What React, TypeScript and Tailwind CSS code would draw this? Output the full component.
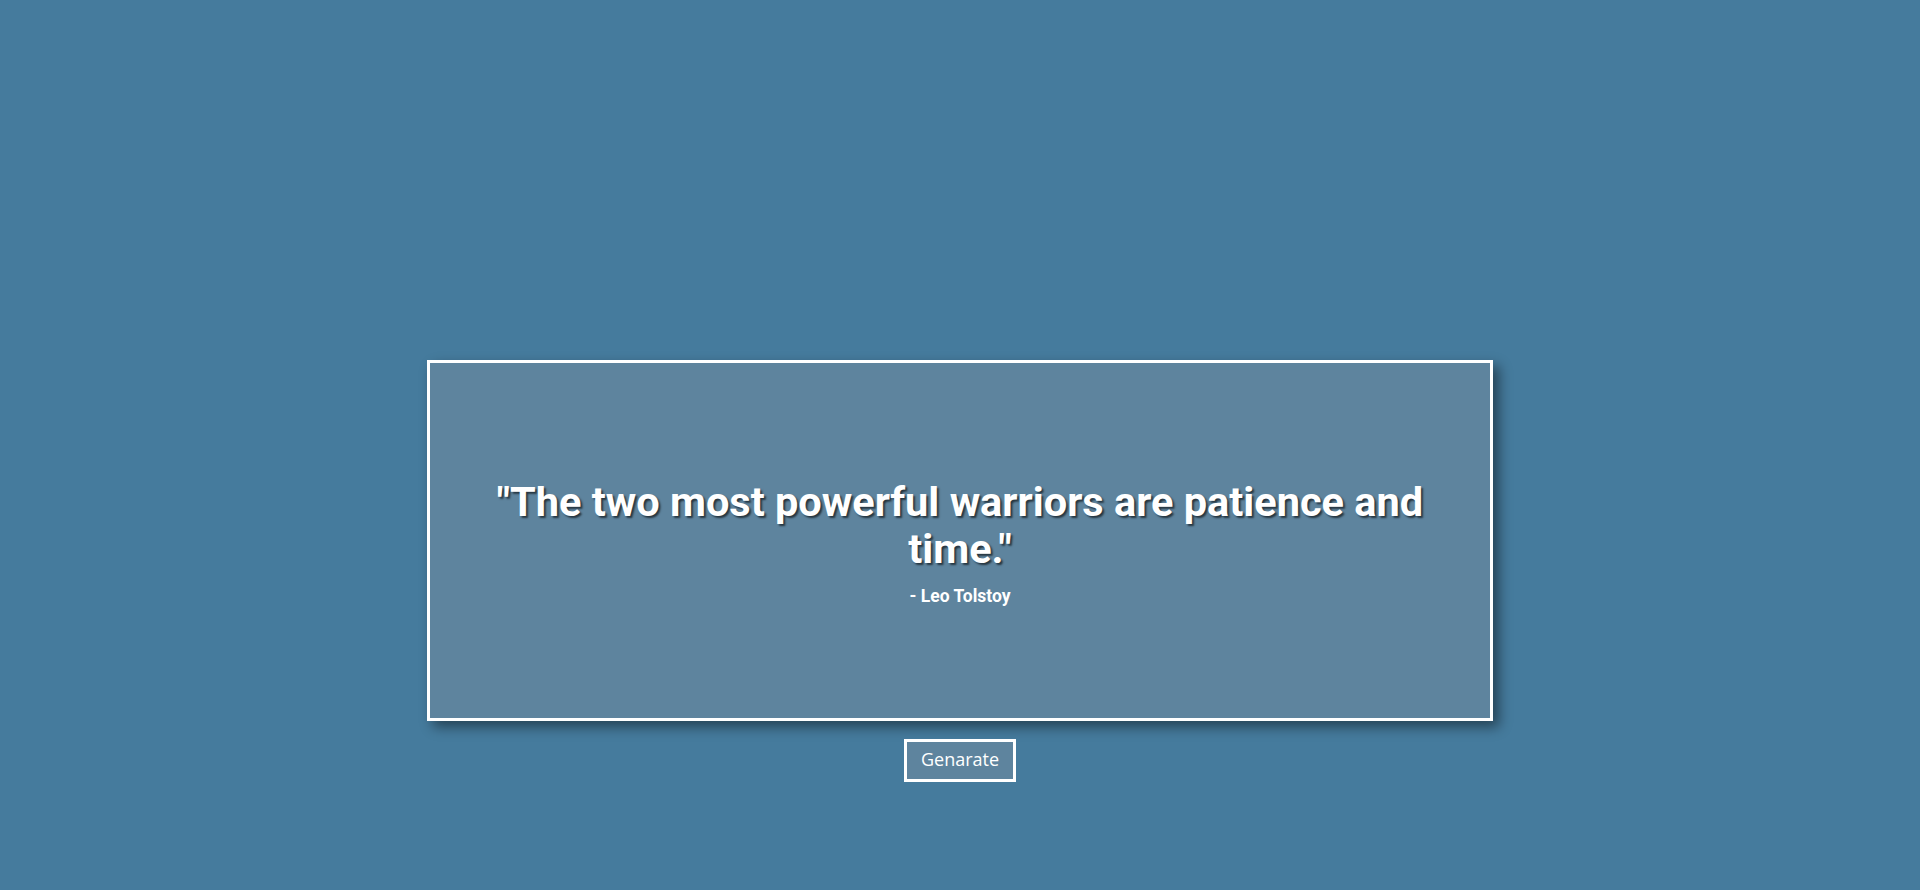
export default function App() {
  return (
    <div className="min-h-screen w-full bg-[#457b9d] flex flex-col items-center pt-[360px]">
      <div className="w-[1066px] h-[361px] border-[3px] border-white bg-[#5e849e] shadow-[6px_6px_12px_rgba(0,0,0,0.45)] flex flex-col items-center justify-center px-[60px] pt-[6px] text-white font-['Roboto',sans-serif]">
        <h1 className="text-[41.5px] leading-[47px] font-bold text-center [text-shadow:2px_2px_2px_rgba(0,0,0,0.6)]">
          "The two most powerful warriors are patience and time."
        </h1>
        <p className="mt-[11px] text-[17.5px] font-bold">- Leo Tolstoy</p>
      </div>
      <button className="mt-[18px] w-[112px] h-[43px] pb-[2px] border-[3px] border-white bg-[#5e849e] text-white text-[18px] font-['Open_Sans',sans-serif]">
        Genarate
      </button>
    </div>
  );
}
